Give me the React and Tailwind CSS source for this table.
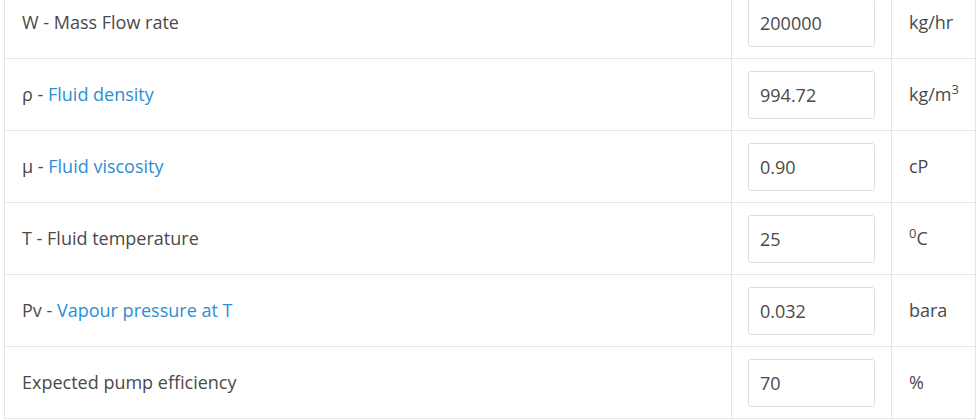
const rows = [
  { sym: "W - ", label: "Mass Flow rate", link: false, value: "200000", unit: <>kg/hr</> },
  { sym: "ρ - ", label: "Fluid density", link: true, value: "994.72", unit: <>kg/m<sup className="text-[13px] -top-[7px]">3</sup></> },
  { sym: "μ - ", label: "Fluid viscosity", link: true, value: "0.90", unit: <>cP</> },
  { sym: "T - ", label: "Fluid temperature", link: false, value: "25", unit: <><sup className="text-[13px] -top-[7px]">0</sup>C</> },
  { sym: "Pv - ", label: "Vapour pressure at T", link: true, value: "0.032", unit: <>bara</> },
  { sym: "", label: "Expected pump efficiency", link: false, value: "70", unit: <>%</> },
];

export default function App() {
  return (
    <div className="h-[420px] w-[980px] overflow-hidden bg-white font-['Open_Sans',sans-serif] text-[18px] text-[#4a4a4a]">
      <table className="-mt-[14px] ml-[4px] w-[972px] border-collapse">
        <tbody>
          {rows.map((r) => (
            <tr key={r.label} className="h-[72px]">
              <td className="w-[727px] border border-[#e6e6e6] pl-[17px]">
                {r.sym}
                {r.link ? <a className="text-[#2b8ed6]">{r.label}</a> : r.label}
              </td>
              <td className="w-[160px] border border-[#e6e6e6] px-[16px]">
                <input
                  readOnly
                  value={r.value}
                  className="block h-[48px] w-[127px] rounded-[3px] border border-[#dedede] px-[11px] text-[18px] text-[#4a4a4a] outline-none"
                />
              </td>
              <td className="border border-[#e6e6e6] pl-[17px]">{r.unit}</td>
            </tr>
          ))}
        </tbody>
      </table>
    </div>
  );
}
